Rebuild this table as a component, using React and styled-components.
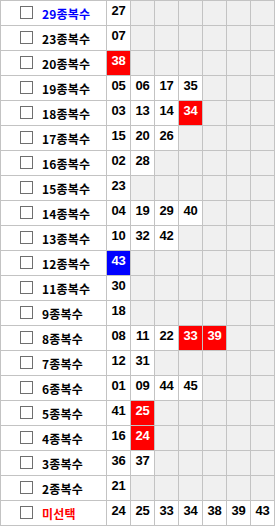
import React from "react";
import styled, { createGlobalStyle } from "styled-components";

const GlobalStyle = createGlobalStyle`
  html, body { margin: 0; padding: 0; background: #ffffff; }
`;

const Board = styled.div`
  display: grid;
  grid-template-columns: 105px repeat(7, 23px);
  grid-auto-rows: 24px;
  gap: 1px;
  padding: 1px;
  width: max-content;
  background: #c3c3c3;
`;

const LabelCell = styled.label`
  display: flex;
  align-items: center;
  gap: 9px;
  padding-left: 19px;
  background: #ffffff;
  font-family: "Noto Sans CJK KR", "Liberation Sans", sans-serif;
  font-weight: 700;
  font-size: 12px;
  color: ${(p) => p.$tone || "#000000"};
  letter-spacing: 0.2px;
`;

const Box = styled.span`
  flex: none;
  width: 11px;
  height: 11px;
  margin-top: -1px;
  border: 1px solid #6f6f6f;
  background: #ffffff;
`;

const NumCell = styled.div`
  background: ${(p) =>
    p.$hit === "red" ? "#ff0000" : p.$hit === "blue" ? "#0000ff" : p.$empty ? "#f0f0f0" : "#ffffff"};
  color: ${(p) => (p.$hit ? "#ffffff" : "#000000")};
  font-family: "Liberation Sans", Arial, sans-serif;
  font-weight: 700;
  font-size: 13px;
  line-height: 15px;
  padding-top: 2px;
  text-align: center;
  letter-spacing: -0.3px;
`;

const rows = [
  { label: "29종복수", tone: "#0000ff", nums: ["27"] },
  { label: "23종복수", nums: ["07"] },
  { label: "20종복수", nums: [["38", "red"]] },
  { label: "19종복수", nums: ["05", "06", "17", "35"] },
  { label: "18종복수", nums: ["03", "13", "14", ["34", "red"]] },
  { label: "17종복수", nums: ["15", "20", "26"] },
  { label: "16종복수", nums: ["02", "28"] },
  { label: "15종복수", nums: ["23"] },
  { label: "14종복수", nums: ["04", "19", "29", "40"] },
  { label: "13종복수", nums: ["10", "32", "42"] },
  { label: "12종복수", nums: [["43", "blue"]] },
  { label: "11종복수", nums: ["30"] },
  { label: "9종복수", nums: ["18"] },
  { label: "8종복수", nums: ["08", "11", "22", ["33", "red"], ["39", "red"]] },
  { label: "7종복수", nums: ["12", "31"] },
  { label: "6종복수", nums: ["01", "09", "44", "45"] },
  { label: "5종복수", nums: ["41", ["25", "red"]] },
  { label: "4종복수", nums: ["16", ["24", "red"]] },
  { label: "3종복수", nums: ["36", "37"] },
  { label: "2종복수", nums: ["21"] },
  { label: "미선택", tone: "#ff0000", nums: ["24", "25", "33", "34", "38", "39", "43"] },
];

export default function App() {
  return (
    <>
      <GlobalStyle />
      <Board>
        {rows.map((row) => (
          <React.Fragment key={row.label}>
            <LabelCell $tone={row.tone}>
              <Box />
              <span>{row.label}</span>
            </LabelCell>
            {Array.from({ length: 7 }, (_, i) => {
              const n = row.nums[i];
              if (n === undefined) return <NumCell key={i} $empty />;
              const [text, hit] = Array.isArray(n) ? n : [n, null];
              return (
                <NumCell key={i} $hit={hit}>
                  {text}
                </NumCell>
              );
            })}
          </React.Fragment>
        ))}
      </Board>
    </>
  );
}
